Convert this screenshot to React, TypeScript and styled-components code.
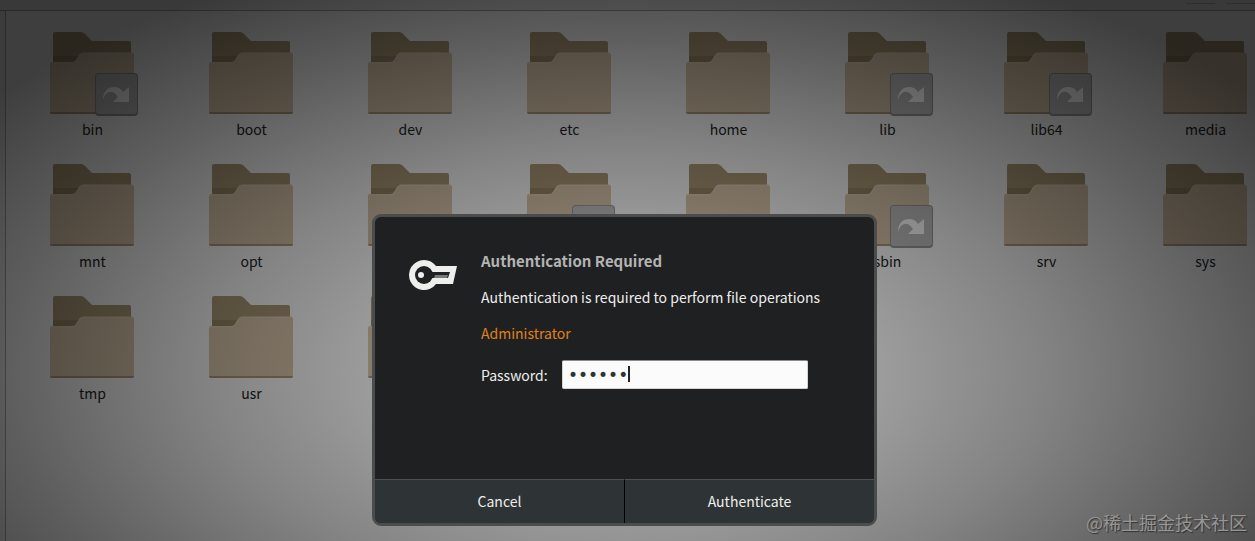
import React from "react";
import styled, { createGlobalStyle } from "styled-components";

const Global = createGlobalStyle`
  * { box-sizing: border-box; }
  html, body, #root { height: 100%; }
  body {
    margin: 0;
    overflow: hidden;
    font: 14px/20px "Noto Sans CJK SC", sans-serif;
  }
`;

const Desktop = styled.div`
  position: relative;
  display: flex;
  flex-direction: column;
  height: 100%;
  overflow: hidden;
  background: #f6f6f6;
`;

const HeaderBar = styled.header`
  flex: none;
  display: flex;
  justify-content: flex-end;
  gap: 11px;
  height: 11px;
  background: #e2e2e2;
  border-bottom: 1px solid #a0a0a0;
`;

const HeaderButtonEdge = styled.span`
  width: 29px;
  height: 4px;
  border-bottom: 1px solid #b8b8b8;
`;

const FilesWindow = styled.div`
  flex: 1;
  display: flex;
  min-height: 0;
`;

const Sidebar = styled.aside`
  flex: none;
  width: 6px;
  background: #ececec;
  border-right: 1px solid #a8a8a8;
`;

const FolderGrid = styled.ul`
  flex: 1;
  display: grid;
  grid-template-columns: repeat(auto-fill, 159px);
  grid-auto-rows: 132px;
  align-content: start;
  margin: 0 -40px 0 0;
  padding: 17px 0 0 7px;
  list-style: none;
`;

const Tile = styled.li`
  display: flex;
  flex-direction: column;
  align-items: center;
  color: #202324;
`;

const FolderArt = styled.svg`
  display: block;
  width: 97px;
  height: 91px;
`;

const Shade = styled.div`
  position: absolute;
  inset: 0;
  display: flex;
  align-items: flex-end;
  justify-content: center;
  padding: 0 6px 15px 0;
  background: radial-gradient(
    ellipse 61% 77% at 50% 69%,
    rgba(0, 0, 0, 0.34) 0%,
    rgba(0, 0, 0, 0.36) 32%,
    rgba(0, 0, 0, 0.47) 55%,
    rgba(0, 0, 0, 0.62) 81%,
    rgba(0, 0, 0, 0.75) 106%
  );
`;

const Dialog = styled.form`
  display: flex;
  flex-direction: column;
  width: 505px;
  max-width: 100%;
  height: 312px;
  border: 3px solid #4b4c4c;
  border-radius: 9px;
  background: #1e2021;
  overflow: hidden;
  color: #eeeeec;
`;

const DialogBody = styled.div`
  flex: 1;
  display: flex;
  gap: 24px;
  padding: 34px 34px 0;
`;

const KeyArt = styled.svg`
  flex: none;
  width: 48px;
  height: 48px;
`;

const Details = styled.div`
  display: flex;
  flex-direction: column;
  flex: 1;
`;

const Title = styled.h1`
  margin: 0 0 16px;
  font-size: 15px;
  line-height: 20px;
  font-weight: 700;
  color: #b4b4b2;
`;

const Message = styled.p<{ $accent?: boolean }>`
  margin: 0 0 16px;
  color: ${(p) => (p.$accent ? "#e0801b" : "#eeeeec")};
`;

const PasswordRow = styled.div`
  display: grid;
  grid-template-columns: 81px 246px;
  align-items: center;
  padding-top: 1px;
`;

const PasswordField = styled.div`
  position: relative;
`;

const PasswordInput = styled.input`
  display: block;
  width: 100%;
  height: 29px;
  padding: 0 5px;
  border: 1px solid #d4d4d4;
  border-top-color: #8a8c8c;
  border-radius: 2px;
  outline: none;
  background: #fbfbfb;
  color: #2e3436;
  font: 17px/20px "DejaVu Sans", sans-serif;
`;

const Caret = styled.span`
  position: absolute;
  left: 66px;
  top: 6px;
  width: 2px;
  height: 16px;
  background: #202324;
`;

const Actions = styled.div`
  display: flex;
  height: 44px;
`;

const ActionButton = styled.button`
  flex: 1;
  padding: 0 0 2px;
  border: 0;
  border-top: 1px solid #4c5051;
  background: #2e3335;
  color: #eeeeec;
  font: inherit;
  & + & { border-left: 1px solid #000; }
`;

const Watermark = styled.span`
  position: absolute;
  right: 8px;
  bottom: 7px;
  font: 18px/24px "Noto Sans CJK SC", sans-serif;
  color: #969696;
  text-shadow: 1px 1px 1px #303030;
`;

const folders: { name?: string; link?: boolean }[] = [
  { name: "bin", link: true }, { name: "boot" }, { name: "dev" }, { name: "etc" },
  { name: "home" }, { name: "lib", link: true }, { name: "lib64", link: true }, { name: "media" },
  { name: "mnt" }, { name: "opt" }, {}, { link: true },
  {}, { name: "sbin", link: true }, { name: "srv" }, { name: "sys" },
  { name: "tmp" }, { name: "usr" }, {},
];

function Folder({ name, link }: { name?: string; link?: boolean }) {
  return (
    <Tile>
      <FolderArt viewBox="0 0 97 91" aria-hidden="true">
        <path d="M9 36V6q0-2 2-2h26q2 0 4 2l7 7h37q2 0 2 2v20z" fill="#a89674" />
        <path d="M9 35h20q2 0 3-2l5-8h50v3H9z" fill="#978564" />
        <path d="M6 36q0-2 2-2h20q3 0 4-2l3-5q1-2 3-2h50q2 0 2 2v57q0 2-2 2H8q-2 0-2-2z" fill="#d6c3a8" />
        <path d="M7 35h21q3 0 4-2l4-6q1-2 3-2h50" fill="none" stroke="#dfceb6" />
        <path d="M6 84h84q0 2-2 2H8q-2 0-2-2z" fill="#a89579" />
        {link && (
          <g>
            <rect x="51" y="45" width="43" height="43" rx="4" fill="#949494" />
            <rect x="52" y="46" width="41" height="40" rx="3" fill="#bcbdbc" />
            <path d="M59 72C59 63 64 59 70 59Q76 59 79 64L85 59V74H69L74 69Q70 63 65 64Q61 65 59 72Z" fill="#ffffff" />
          </g>
        )}
      </FolderArt>
      {name && <span>{name}</span>}
    </Tile>
  );
}

export default function App() {
  return (
    <>
      <Global />
      <Desktop>
        <HeaderBar>
          <HeaderButtonEdge />
          <HeaderButtonEdge />
        </HeaderBar>
        <FilesWindow>
          <Sidebar />
          <FolderGrid>
            {folders.map((f, i) => <Folder key={i} {...f} />)}
          </FolderGrid>
        </FilesWindow>
        <Shade>
          <Dialog onSubmit={(e) => e.preventDefault()}>
            <DialogBody>
              <KeyArt viewBox="0 0 48 48" aria-hidden="true">
                <path d="M15 9a15 15 0 0 1 12 6h21l-4 18H27A15 15 0 1 1 15 9z" fill="#eeeeec" />
                <circle cx="15" cy="24" r="9" fill="#1e2021" />
                <path d="M20 21h21l-2 6H20z" fill="#1e2021" />
                <path d="M26 24h13l-1 3H25z" fill="#777977" />
                <circle cx="12" cy="24" r="3" fill="#eeeeec" />
              </KeyArt>
              <Details>
                <Title>Authentication Required</Title>
                <Message>Authentication is required to perform file operations</Message>
                <Message $accent>Administrator</Message>
                <PasswordRow>
                  <label htmlFor="password">Password:</label>
                  <PasswordField>
                    <PasswordInput id="password" type="password" defaultValue="secret" />
                    <Caret />
                  </PasswordField>
                </PasswordRow>
              </Details>
            </DialogBody>
            <Actions>
              <ActionButton type="button">Cancel</ActionButton>
              <ActionButton type="submit">Authenticate</ActionButton>
            </Actions>
          </Dialog>
        </Shade>
        <Watermark>@稀土掘金技术社区</Watermark>
      </Desktop>
    </>
  );
}
